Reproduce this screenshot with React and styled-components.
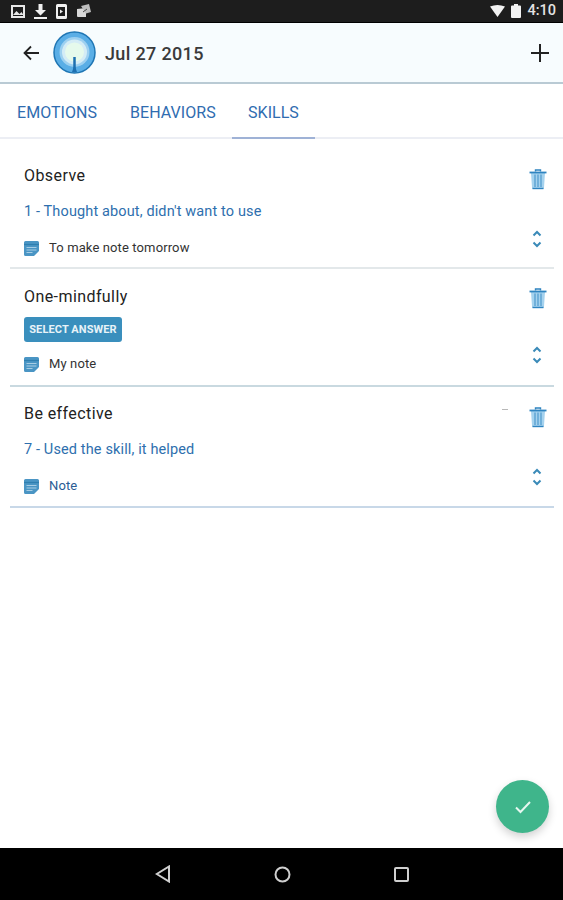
import React from "react";
import styled, { createGlobalStyle } from "styled-components";

const Global = createGlobalStyle`
  html, body { margin: 0; padding: 0; background: #fff; }
  body { font-family: Roboto, "Liberation Sans", sans-serif; }
`;
const Page = styled.div`
  width: 563px; height: 900px; display: flex; flex-direction: column; position: relative; overflow: hidden; background: #fff;
`;
const StatusBar = styled.div`
  height: 22px; flex: none; background: #1d1d1d; border-bottom: 1px solid #000; display: flex; align-items: center; justify-content: space-between; padding: 0 7px 0 11px;
`;
const StatusGroup = styled.div`
  display: flex; align-items: center; gap: ${p => p.$gap}px;
`;
const Clock = styled.span`
  color: #e4e4e4; font-size: 14.500px; font-weight: 500; line-height: 1;
`;
const AppBar = styled.header`
  height: 61px; flex: none; box-sizing: border-box; background: #f7fcfe; border-bottom: 2px solid #b9cad4; display: flex; align-items: center; padding: 0 14px 0 23px;
`;
const Avatar = styled.svg`
  margin-left: 14px; flex: none;
`;
const AppTitle = styled.h1`
  margin: 1px 0 0 9px; font-size: 18px; font-weight: 500; color: #3a3a3a; letter-spacing: 0.35px; flex: 1;
`;
const Tabs = styled.nav`
  height: 55px; flex: none; box-sizing: border-box; display: flex; border-bottom: 2px solid #eceef4; padding-left: 1px;
`;
const Tab = styled.div`
  box-sizing: border-box; height: 55px; padding: 20px 16px 0; font-size: 16px; line-height: 18px; color: #2f6cb0; width: ${p => p.$w}px; letter-spacing: 0.05px;
  border-bottom: 2px solid ${p => (p.$active ? "#9fb2d6" : "transparent")}; flex: none; white-space: nowrap;
`;
const List = styled.main`
  flex: 1; padding: 0 9px 0 10px; min-height: 0;
`;
const Row = styled.section`
  box-sizing: border-box; height: ${p => p.$h}px; border-bottom: 2px solid ${p => p.$line}; padding: ${p => p.$top}px 0 0 14px; position: relative;
`;
const TopLine = styled.div`
  display: flex; justify-content: space-between; align-items: flex-start; padding-right: 6px;
`;
const SkillName = styled.div`
  font-size: 16px; line-height: 20px; color: #222; letter-spacing: 0.42px;
`;
const TrashSlot = styled.div`
  display: flex; margin-top: ${p => p.$m}px;
`;
const Answer = styled.div`
  font-size: 14.500px; line-height: 18px; color: #2e6fae; margin-top: 13px; letter-spacing: 0.13px;
`;
const SelectButton = styled.button`
  display: block; width: 98px; height: 25px; border: none; border-radius: 3px; background: #3a8fbd; color: #e8f3f8; font: 700 11px/25px Roboto, sans-serif; padding: 0; margin-top: 8px; letter-spacing: 0.1px;
`;
const NoteLine = styled.div`
  display: flex; align-items: flex-end; justify-content: space-between; padding-right: 11px; margin-top: ${p => p.$m}px;
`;
const NoteLeft = styled.div`
  display: flex; align-items: center; gap: 10px; font-size: 13px; line-height: 16px; color: ${p => p.$c || "#333"}; letter-spacing: 0.12px;
`;
const ChevronSlot = styled.div`
  display: flex; margin-bottom: 7px;
`;
const Tick = styled.span`
  position: absolute; top: 22px; right: 46px; width: 6px; height: 1px; background: #b8b8b8;
`;
const Fab = styled.button`
  position: absolute; right: 14px; bottom: 67px; width: 53px; height: 53px; border: none; border-radius: 50%; background: #3fb58b; box-shadow: 0 4px 8px rgba(0,0,0,.18); display: flex; align-items: center; justify-content: center; padding: 0;
`;
const NavBar = styled.footer`
  height: 52px; flex: none; background: #000; display: flex; align-items: center; justify-content: center; gap: 103px;
`;

const Trash = () => (
  <svg width="20" height="22" viewBox="0 0 20 22">
    <path d="M3 5h14l-1 14.500a1.500 1.500 0 0 1-1.500 1.500h-9A1.500 1.500 0 0 1 4 19.500z" fill="#a5d2ee" />
    <path d="M1.500 4.500h17" stroke="#2f84c0" strokeWidth="1.800" />
    <path d="M7.500 3.500V2h5v1.500" stroke="#2f84c0" strokeWidth="1.400" fill="none" />
    <path d="M7 6.500v12.500M10 6.500v12.500M13 6.500v12.500" stroke="#4f9acd" strokeWidth="1.200" />
    <path d="M4.500 20.500h11" stroke="#2f84c0" strokeWidth="1.400" />
  </svg>
);
const Chevrons = () => (
  <svg width="12" height="20" viewBox="0 0 12 20" fill="none" stroke="#3a8ab8" strokeWidth="2">
    <path d="M2.500 6.500 6 3l3.500 3.500" />
    <path d="M2.500 13.500 6 17l3.500-3.500" />
  </svg>
);
const NoteIcon = () => (
  <svg width="15" height="15" viewBox="0 0 15 15">
    <path d="M0 1.500A1.500 1.500 0 0 1 1.500 0h12A1.500 1.500 0 0 1 15 1.500V10l-5 5H1.500A1.500 1.500 0 0 1 0 13.500z" fill="#4a95c4" />
    <path d="M0 3.500h15" stroke="#2f7fb0" strokeWidth="1.200" />
    <path d="M2.500 6.500h10M2.500 9h10M2.500 11.500h6" stroke="#a7cde4" strokeWidth="1" />
  </svg>
);

const Item = ({ h, top, line, name, answer, trashTop, note, noteM, noteColor, tick }) => (
  <Row $h={h} $top={top} $line={line}>
    {tick && <Tick />}
    <TopLine>
      <SkillName>{name}</SkillName>
      <TrashSlot $m={trashTop}><Trash /></TrashSlot>
    </TopLine>
    {answer ? <Answer>{answer}</Answer> : <SelectButton>SELECT ANSWER</SelectButton>}
    <NoteLine $m={noteM}>
      <NoteLeft $c={noteColor}><NoteIcon />{note}</NoteLeft>
      <ChevronSlot><Chevrons /></ChevronSlot>
    </NoteLine>
  </Row>
);

export default function App() {
  return (
    <Page>
      <Global />
      <StatusBar>
        <StatusGroup $gap={9}>
          <svg width="14" height="13" viewBox="0 0 14 13"><path d="M1 1h12v11H1z" fill="none" stroke="#e8e8e8" strokeWidth="2"/><path d="M2 10l3.500-4 3 3 2-2 2 3z" fill="#e8e8e8"/></svg>
          <svg width="13" height="15" viewBox="0 0 13 15"><path d="M4.500 0h4v6h3.500l-5.500 5.500L1 6h3.500zM0 13h13v2H0z" fill="#f0f0f0"/></svg>
          <svg width="11" height="15" viewBox="0 0 11 15"><path fillRule="evenodd" d="M1.500 0h8A1.500 1.500 0 0 1 11 1.500v12A1.500 1.500 0 0 1 9.500 15h-8A1.500 1.500 0 0 1 0 13.500v-12A1.500 1.500 0 0 1 1.500 0zM2 3v9h7V3z" fill="#f0f0f0"/><path d="M4 5.500l3 2-3 2z" fill="#f0f0f0"/></svg>
          <svg width="16" height="14" viewBox="0 0 16 14"><path d="M1 5l9-1v9H2a1 1 0 0 1-1-1z" fill="#d8d8d8"/><path d="M5 2l8-2 2 8-5 1.500z" fill="#bdbdbd"/><path d="M7 8l4-3" stroke="#444"/></svg>
        </StatusGroup>
        <StatusGroup $gap={6}>
          <svg width="15" height="12" viewBox="0 0 15 12"><path d="M0 1.500Q7.500-1.500 15 1.500L7.500 12z" fill="#f2f2f2"/></svg>
          <svg width="10" height="14" viewBox="0 0 10 14"><path d="M3 0h4v1.500h2a1 1 0 0 1 1 1V13a1 1 0 0 1-1 1H1a1 1 0 0 1-1-1V2.500a1 1 0 0 1 1-1h2z" fill="#f2f2f2"/></svg>
          <Clock>4:10</Clock>
        </StatusGroup>
      </StatusBar>
      <AppBar>
        <svg width="16" height="16" viewBox="0 0 16 16" fill="none" stroke="#222" strokeWidth="1.800"><path d="M16 8H1.500M8 1.500 1.500 8 8 14.500"/></svg>
        <Avatar width="43" height="43" viewBox="0 0 43 43">
          <circle cx="21.500" cy="21.500" r="20.500" fill="#5aaee6" stroke="#1f76b4" strokeWidth="1.500"/>
          <circle cx="21.500" cy="21" r="15" fill="#9dd0f0"/>
          <circle cx="21.500" cy="21" r="12.500" fill="#d4ecf6"/>
          <circle cx="21.500" cy="21" r="9.500" fill="#e6faec"/>
          <path d="M21.500 26v14" stroke="#1d6fb0" strokeWidth="2.500"/>
          <path d="M19 41l2.500-7 2.500 7z" fill="#1d6fb0"/>
        </Avatar>
        <AppTitle>Jul 27 2015</AppTitle>
        <svg width="18" height="18" viewBox="0 0 18 18" stroke="#222" strokeWidth="2"><path d="M9 0v18M0 9h18"/></svg>
      </AppBar>
      <Tabs>
        <Tab $w={113}>EMOTIONS</Tab>
        <Tab $w={118}>BEHAVIORS</Tab>
        <Tab $w={83} $active>SKILLS</Tab>
      </Tabs>
      <List>
        <Item h={130} top={27} trashTop={2} line="#e3e8ea" name="Observe" answer="1 - Thought about, didn't want to use" note="To make note tomorrow" noteM={8} />
        <Item h={118} top={18} trashTop={0} line="#c9d9e0" name="One-mindfully" note="My note" noteM={3} />
        <Item h={121} top={17} trashTop={2} line="#c8d8e8" name="Be effective" answer="7 - Used the skill, it helped" note="Note" noteM={8} noteColor="#2a5c94" tick />
      </List>
      <Fab>
        <svg width="16" height="14" viewBox="0 0 16 14" fill="none" stroke="#e6f7f0" strokeWidth="2"><path d="M1 7.500l4.500 4.500L15 2"/></svg>
      </Fab>
      <NavBar>
        <svg width="16" height="18" viewBox="0 0 16 18" fill="none" stroke="#cfcfcf" strokeWidth="2"><path d="M14 1.500v15L1.800 9z"/></svg>
        <svg width="17" height="17" viewBox="0 0 17 17" fill="none" stroke="#cfcfcf" strokeWidth="2"><circle cx="8.500" cy="8.500" r="7"/></svg>
        <svg width="15" height="15" viewBox="0 0 15 15" fill="none" stroke="#cfcfcf" strokeWidth="2"><rect x="1" y="1" width="13" height="13" rx="1"/></svg>
      </NavBar>
    </Page>
  );
}
